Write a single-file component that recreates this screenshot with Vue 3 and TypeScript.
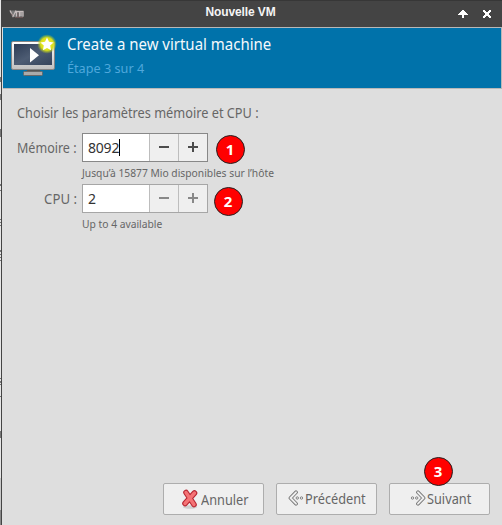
<script setup lang="ts">
import { ref } from 'vue'

interface Field {
  id: string
  label: string
  value: string
  hint: string
  focused: boolean
  badge: number
}

const fields = ref<Field[]>([
  { id: 'memory', label: 'Mémoire :', value: '8092', hint: 'Jusqu’à 15877 Mio disponibles sur l’hôte', focused: true, badge: 1 },
  { id: 'cpu', label: 'CPU :', value: '2', hint: 'Up to 4 available', focused: false, badge: 2 },
])

// Parts of the window behind that show along the left edge: [top, height]
const slivers: number[][] = [
  [77, 5], [94, 6], [129, 8], [184, 2], [190, 1], [219, 1], [222, 1], [225, 1], [250, 2], [254, 1],
  [257, 1], [260, 1], [378, 1], [381, 2], [384, 1], [396, 1], [431, 7],
]
</script>

<template>
  <div class="screen">
    <svg class="behind" width="1" height="525">
      <rect width="1" height="525" fill="#e6e6e6" />
      <rect v-for="s in slivers" :key="s[0]" :y="s[0]" width="1" :height="s[1]" fill="#777" />
      <rect y="478" width="1" height="32" fill="#c8c8c8" />
      <rect y="510" width="1" height="15" fill="#888" />
    </svg>
    <div class="window">
      <div class="titlebar">
        <svg class="logo" width="16" height="10" viewBox="0 0 16 10">
          <path d="M.5 1.500h14v6.500H4z" fill="#777" />
          <path d="M1 1.500l3 6 3-6M7.500 7.500V2.500h3v5M10.500 2.500h3.500v5M12 3v4" fill="none" stroke="#c5bcbc" stroke-width="1.200" />
          <path d="M2 4.500l1.500 2M9 4v4M6 8.500h8" fill="none" stroke="#6a5555" />
        </svg>
        <span class="title">Nouvelle VM</span>
        <svg class="controls" width="36" height="10" viewBox="0 0 36 10" shape-rendering="crispEdges">
          <path d="M5 1h2v1h1v1h1v1h1v1h1v1H7v3H5V6H1V5h1V4h1V3h1V2h1z" fill="#fff" />
          <path d="M26 1h2v1h1v1h2V2h1V1h2v2h-1v1h-1v2h1v1h1v2h-2V8h-1V7h-2v1h-1v1h-2V7h1V6h1V4h-1V3h-1z" fill="#fff" />
        </svg>
      </div>
      <div class="header">
        <svg class="machine" width="50" height="46" viewBox="0 0 50 46">
          <defs>
            <linearGradient id="frame" x1="0" y1="0" x2="0" y2="1">
              <stop offset="0" stop-color="#fff" /><stop offset="1" stop-color="#bfbfbf" />
            </linearGradient>
            <linearGradient id="glass" x1="0" y1="0" x2="1" y2="1">
              <stop offset="0" stop-color="#2c3b54" /><stop offset=".5" stop-color="#4d5c73" /><stop offset="1" stop-color="#35445b" />
            </linearGradient>
            <radialGradient id="glow">
              <stop offset="0" stop-color="#f5f02a" /><stop offset=".65" stop-color="#d9df1b" /><stop offset="1" stop-color="#a9c422" stop-opacity="0" />
            </radialGradient>
          </defs>
          <path d="M18 35h13v4H18z" fill="#555" />
          <rect x="14.500" y="37.500" width="19" height="4" rx="1" fill="#aaa" stroke="#686868" />
          <rect x="2.500" y="7.500" width="43" height="28" rx="1.500" fill="url(#frame)" stroke="#858585" />
          <rect x="5" y="10" width="38" height="21" fill="url(#glass)" />
          <path d="M21 14v14.500l9-7.300z" fill="#fff" />
          <circle cx="38" cy="10" r="9.800" fill="url(#glow)" />
          <path d="M38 3.500l2 4.300 4.600.6-3.400 3.200.9 4.700-4.100-2.200-4.100 2.200.9-4.700-3.400-3.200 4.600-.6z" fill="#fff" />
        </svg>
        <div class="heading">
          <div class="h1">Create a new virtual machine</div>
          <div class="step">Étape 3 sur 4</div>
        </div>
      </div>
      <div class="body">
        <div class="intro">Choisir les paramètres mémoire et CPU :</div>
        <div v-for="f in fields" :key="f.id" class="field" :class="f.id">
          <div class="label"><span>{{ f.label }}</span></div>
          <div class="spin" :class="{ focused: f.focused }">
            <div class="value"><span>{{ f.value }}</span><i v-if="f.focused" class="caret"></i></div>
            <div class="step-btn"><svg width="12" height="12"><path d="M1 5h10v2H1z" /></svg></div>
            <div class="step-btn"><svg width="12" height="12"><path d="M1 5h10v2H1zM5 1h2v10H5z" /></svg></div>
            <div class="badge">{{ f.badge }}</div>
          </div>
          <div class="hint">{{ f.hint }}</div>
        </div>
        <div class="actions">
          <button class="cancel" type="button">
            <svg width="18" height="20" viewBox="0 0 18 20">
              <ellipse cx="9" cy="18" rx="7" ry="1.800" fill="#bbb" opacity=".6" />
              <path d="M5 3.500l8 12M13.500 4L4 14.500" stroke="#b72632" stroke-width="5.600" stroke-linecap="round" />
              <path d="M5 3.500l8 12M13.500 4L4 14.500" stroke="#f47375" stroke-width="3.400" stroke-linecap="round" />
            </svg><span>Annuler</span>
          </button>
          <button class="previous" type="button">
            <svg width="16" height="16" viewBox="0 0 16 16" fill="none">
              <path d="M8 2.300L2.500 8 8 13.700" stroke="#777" stroke-width="3.800" stroke-linecap="round" stroke-linejoin="round" />
              <path d="M8 2.300L2.500 8 8 13.700" stroke="#eee" stroke-width="1.900" stroke-linecap="round" stroke-linejoin="round" />
              <circle cx="9.300" cy="8" r="1.200" stroke="#777" stroke-width=".9" /><circle cx="13.500" cy="8" r="1.200" stroke="#777" stroke-width=".9" />
            </svg><span>Précédent</span>
          </button>
          <button class="next" type="button">
            <svg width="16" height="16" viewBox="0 0 16 16" fill="none">
              <path d="M8 2.300L13.500 8 8 13.700" stroke="#777" stroke-width="3.800" stroke-linecap="round" stroke-linejoin="round" />
              <path d="M8 2.300L13.500 8 8 13.700" stroke="#eee" stroke-width="1.900" stroke-linecap="round" stroke-linejoin="round" />
              <circle cx="2.500" cy="8" r="1.200" stroke="#777" stroke-width=".9" /><circle cx="6.700" cy="8" r="1.200" stroke="#777" stroke-width=".9" />
            </svg><span>Suivant</span>
            <div class="badge">3</div>
          </button>
        </div>
      </div>
    </div>
  </div>
</template>

<style scoped>
.screen { display: flex; width: 502px; height: 525px; overflow: hidden; font-family: "Noto Sans", sans-serif; color: #666; }
.screen * { box-sizing: border-box; }
.screen span, .h1, .step, .intro, .hint { white-space: nowrap; }
svg { display: block; flex: none; }
.window { width: 501px; border-left: 1px solid #444; display: flex; flex-direction: column; background: #dedede; }
.titlebar { height: 27px; flex: none; display: flex; align-items: center; background: #444; border-top: 1px solid #373737; }
.logo { margin-left: 7px; }
.title { flex: 1; text-align: center; font: bold 12px/16px "Liberation Sans", sans-serif; color: #f4f4f4; padding: 0 1px 4px 0; letter-spacing: -.1px; }
.controls { margin-right: 9px; }
.header { height: 62px; flex: none; border: 1px solid #b8b8b8; border-left: 0; background: #0072aa; display: flex; margin-left: 1px; }
.machine { margin: 6px 0 0 6px; }
.heading { margin-left: 8px; }
.h1, .step, .intro, .hint { transform-origin: 0 50%; }
.h1 { color: #f4f9fc; font-size: 16px; line-height: 22px; margin-top: 5px; transform: scaleX(.936); }
.step { color: #4fa8dc; font-size: 13px; line-height: 20px; margin-top: 3px; transform: scaleX(.975); }
.body { flex: 1; display: flex; flex-direction: column; padding: 14px 12px 10px 15px; }
.intro { font-size: 14px; line-height: 20px; margin-bottom: 10px; transform: scaleX(.91); }
.field { display: grid; grid-template-columns: 60px 126px; grid-template-rows: 29px 22px; column-gap: 5px; }
.label { display: flex; justify-content: flex-end; align-items: center; font-size: 14px; }
.label span { transform: scaleX(.895); transform-origin: 100% 50%; }
.cpu .label span { transform: scaleX(.94); }
.spin { display: flex; border: 1px solid #a6a6a6; position: relative; background: #efefef; }
.spin.focused { border-color: #888; }
.value { width: 66px; background: #fff; color: #333; font-size: 14px; letter-spacing: -.2px; display: flex; align-items: center; padding-left: 5px; }
.caret { width: 1px; height: 17px; background: #000; }
.step-btn { width: 29px; border-left: 1px solid #bdbdbd; display: flex; align-items: center; justify-content: center; }
.step-btn svg { margin-top: -1px; }
.step-btn path { fill: #888; }
.focused .step-btn path { fill: #4c4c4c; }
.hint { grid-column: 2; font-size: 11px; line-height: 22px; transform: scaleX(.935); }
.badge { position: absolute; width: 29px; height: 29px; border: 1px solid #222; border-radius: 50%; background: #f00; color: #fff; font: bold 15px/27px "Noto Sans", sans-serif; text-align: center; }
.memory .badge { left: 132.5px; top: .5px; }
.cpu .badge { left: 130.5px; top: 1.5px; }
.actions { margin-top: auto; display: flex; justify-content: flex-end; gap: 12px; }
button { width: 101px; height: 32px; flex: none; border: 1px solid #adadad; border-radius: 2px; background: #efefef; color: #666; font: 14px/20px "Noto Sans", sans-serif; padding: 0; display: flex; align-items: center; position: relative; }
button span { transform: scaleX(.91); transform-origin: 0 50%; }
button svg { margin-top: -2px; }
.cancel { padding-left: 17px; }
.cancel svg { margin-top: 0; }
.cancel span { margin: 1px 0 0 2px; }
.previous { padding-left: 11px; }
.previous span { margin-left: 1px; }
.next { padding-left: 20px; }
.next span { margin-left: 1px; }
.next .badge { left: 33.5px; top: -27.5px; }
</style>
